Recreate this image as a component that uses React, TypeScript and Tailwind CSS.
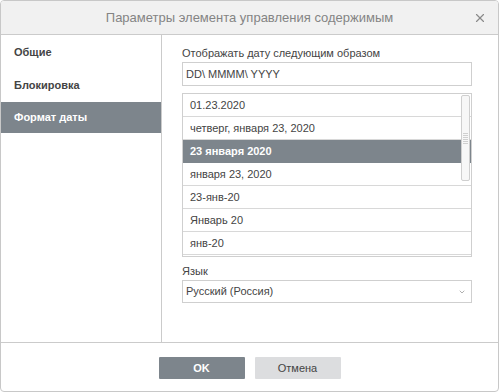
import { X, ChevronDown } from "lucide-react";

const FORMATS = [
  "01.23.2020",
  "четверг, января 23, 2020",
  "23 января 2020",
  "января 23, 2020",
  "23-янв-20",
  "Январь 20",
  "янв-20",
  "",
];

const SELECTED = 2;

// Диалог параметров элемента управления содержимым, вкладка «Формат даты».
export default function App() {
  return (
    <div
      className="flex h-[392px] w-[499px] flex-col overflow-hidden rounded-[4px] border border-[#c8c8c8] bg-white text-[11px] text-[#444]"
      style={{ fontFamily: '"Liberation Sans", Arial, sans-serif' }}
    >
      <div className="relative flex h-[34px] shrink-0 items-center justify-center border-b border-[#cbcbcb] bg-[#f1f1f1]">
        <span className="text-[13px] text-[#848484]">Параметры элемента управления содержимым</span>
        <X className="absolute right-[11px] top-[10px] h-[14px] w-[14px] text-[#8a8a8a]" strokeWidth={2} />
      </div>

      <div className="flex min-h-0 flex-1">
        <div className="flex w-[161px] shrink-0 flex-col border-r border-[#cbcbcb] pt-px font-bold">
          <div className="flex h-[33px] items-center pl-[13px]">Общие</div>
          <div className="flex h-[33px] items-center pl-[13px]">Блокировка</div>
          <div className="flex h-[31px] items-center bg-[#7d858c] pl-[13px] text-white">Формат даты</div>
        </div>

        <div className="flex flex-1 flex-col pl-[20px] pr-[26px] pt-[11px]">
          <div className="leading-[14px]">Отображать дату следующим образом</div>
          <div className="mt-[2px] flex h-[24px] items-center border border-[#cfcfcf] px-[3px]">
            DD\ MMMM\ YYYY
          </div>

          <div className="relative mt-[7px] h-[164px] overflow-hidden border border-[#cfcfcf]">
            {FORMATS.map((f, i) => (
              <div
                key={i}
                className={
                  i === SELECTED
                    ? "flex h-[23px] items-center border-b border-[#7d858c] bg-[#7d858c] px-[7px] font-bold text-white"
                    : "flex h-[23px] items-center border-b border-[#d8d8d8] px-[7px]"
                }
              >
                {f}
              </div>
            ))}
            <div className="absolute right-[1px] top-[1px] flex h-[86px] w-[9px] flex-col items-center justify-center gap-[1px] rounded-[2px] border border-[#cfcfcf] bg-[#f7f7f7]">
              {[0, 1, 2, 3, 4, 5].map((n) => (
                <div key={n} className="h-px w-[5px] bg-[#cfcfcf]" />
              ))}
            </div>
          </div>

          <div className="mt-[7px] leading-[14px]">Язык</div>
          <div className="relative mt-[2px] flex h-[23px] items-center border border-[#cfcfcf] px-[3px]">
            Русский (Россия)
            <ChevronDown className="absolute right-[5px] top-[7px] h-[8px] w-[8px] text-[#888]" strokeWidth={2} />
          </div>
        </div>
      </div>

      <div className="flex h-[49px] shrink-0 items-center justify-center gap-[10px] border-t border-[#cbcbcb] pt-[2px]">
        <button className="h-[22px] w-[86px] rounded-[1px] bg-[#7d858c] text-[11px] font-bold text-white">OK</button>
        <button className="h-[22px] w-[86px] rounded-[1px] bg-[#dcdddf] text-[11px] text-[#444]">Отмена</button>
      </div>
    </div>
  );
}
